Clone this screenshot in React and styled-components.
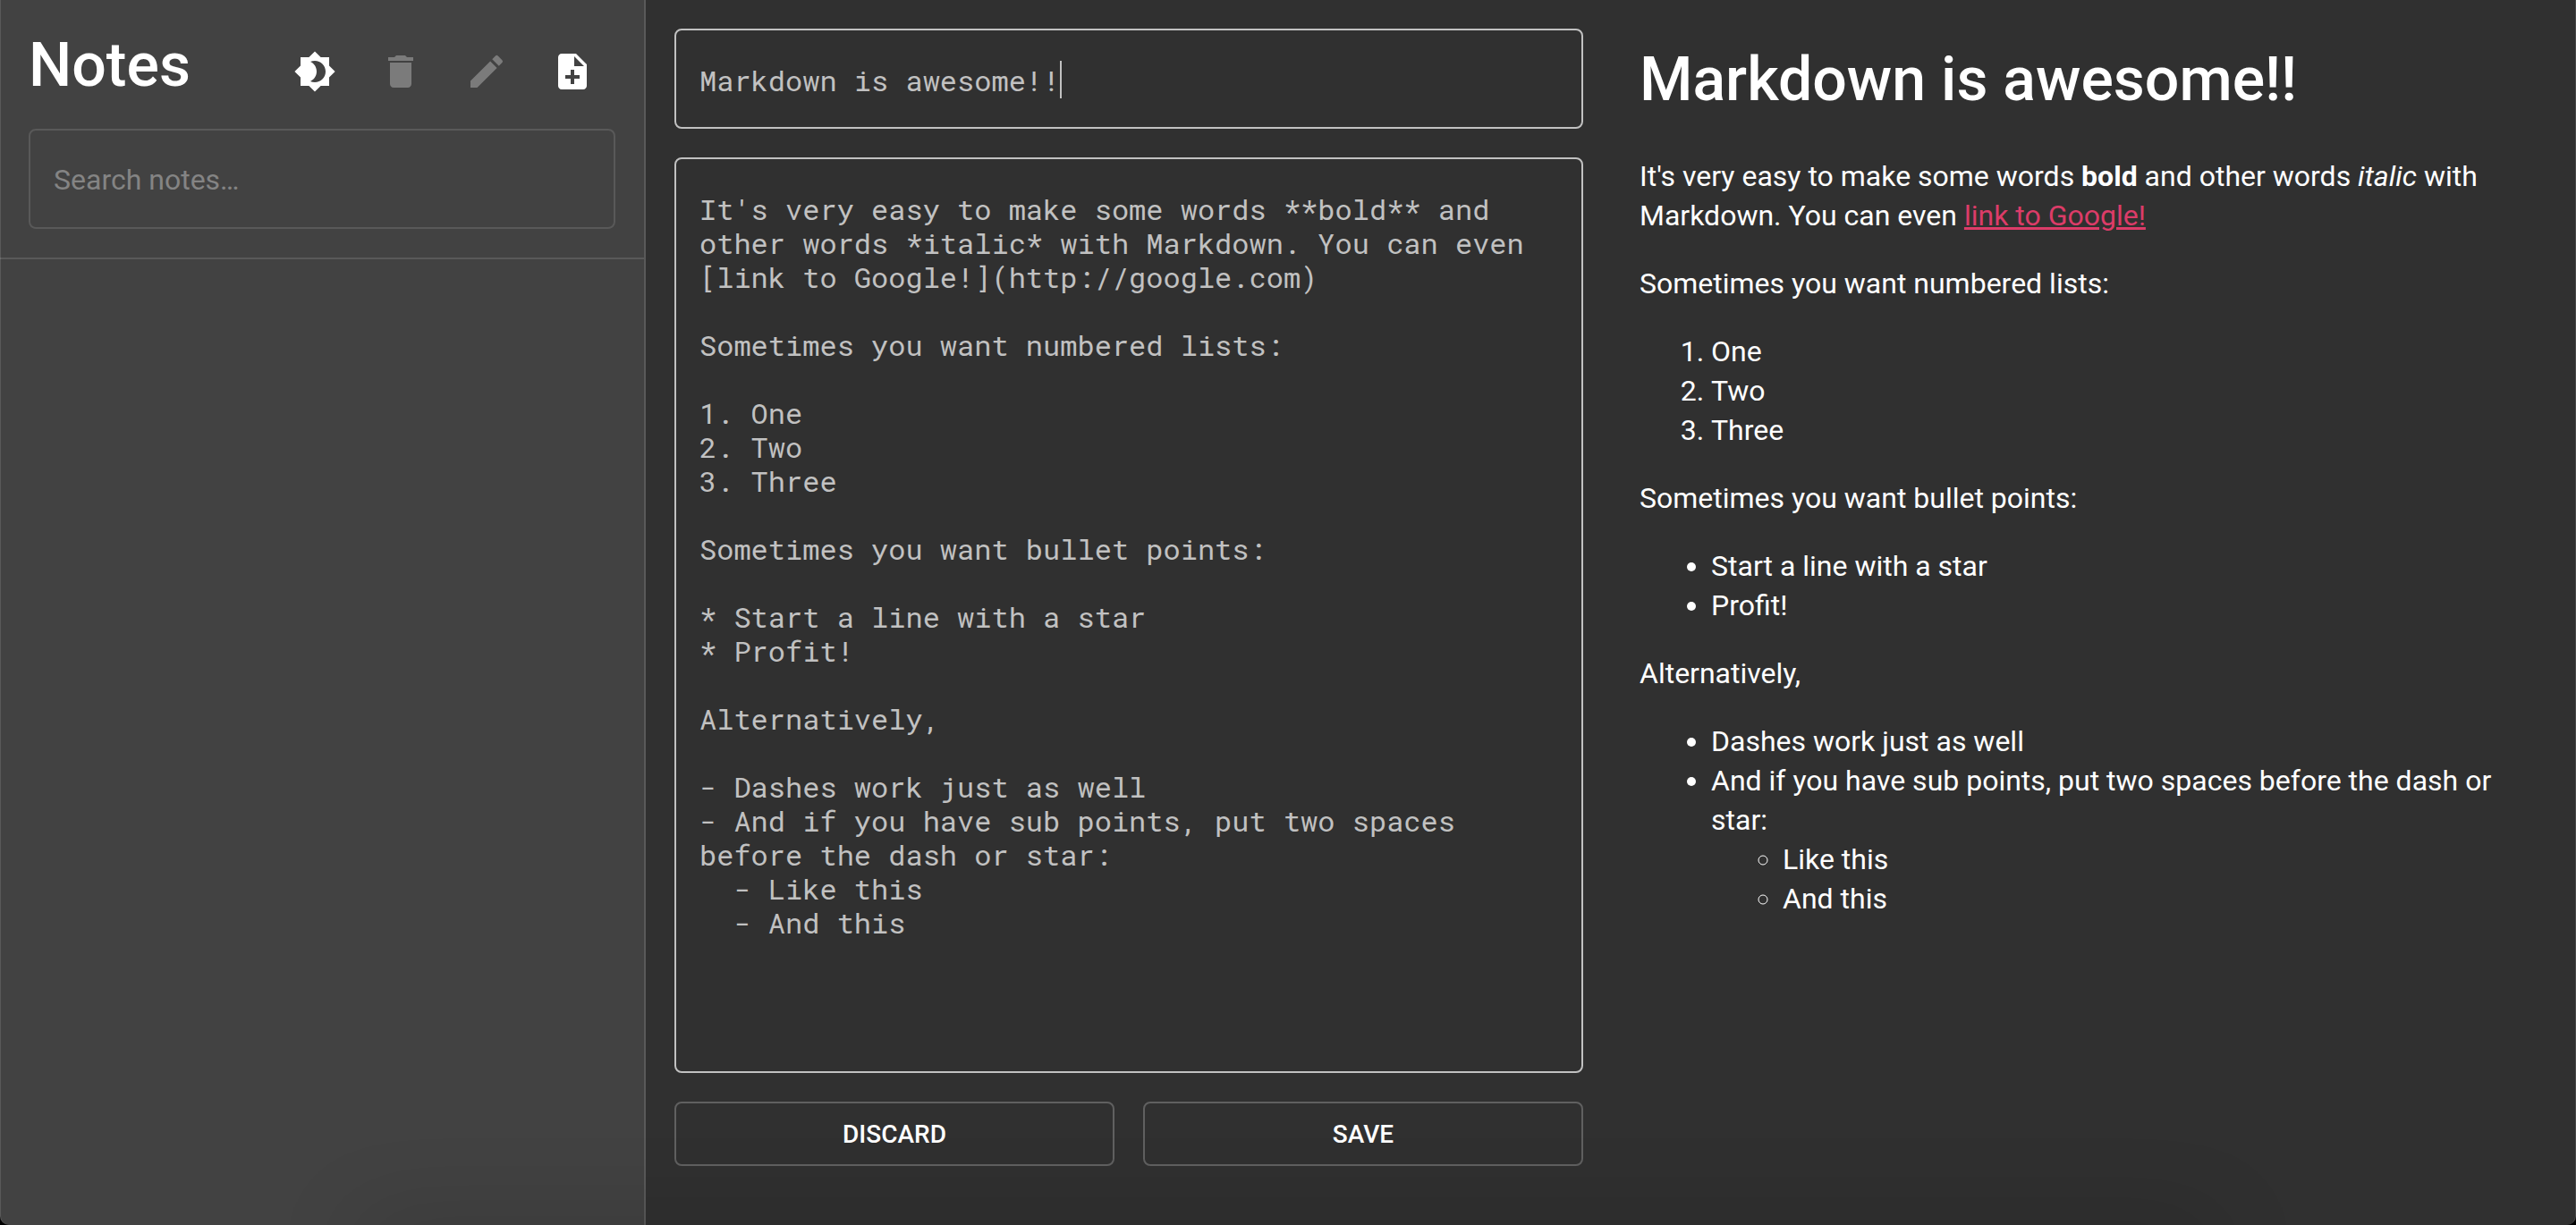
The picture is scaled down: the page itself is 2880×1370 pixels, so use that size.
import React, { useState } from "react";
import styled, { createGlobalStyle } from "styled-components";
import { MdBrightness4, MdDelete, MdEdit, MdNoteAdd } from "react-icons/md";

const GlobalStyle = createGlobalStyle`
  *, *::before, *::after { box-sizing: border-box; }
  html, body, #root { height: 100%; }
  body {
    margin: 0;
    background: #303030;
    color: #fff;
    font-family: Roboto, "Liberation Sans", sans-serif;
    font-size: 32px;
    line-height: 44px;
  }
`;

const MONO = `"Roboto Mono", "DejaVu Sans Mono", "Liberation Mono", monospace`;

const Shell = styled.div`
  display: flex;
  height: 100%;
  overflow: hidden;
`;

/* Window edge and the soft shadow along its bottom, drawn over the panels. */
const WindowFrame = styled.div`
  position: fixed;
  inset: 0;
  overflow: hidden;
  pointer-events: none;
  border: 1px solid rgba(255, 255, 255, 0.12);
  border-width: 0 1px;
  border-radius: 0 0 10px 10px;
  box-shadow: 0 0 0 12px #000;

  &::after {
    content: "";
    position: absolute;
    left: 14%;
    right: 14%;
    bottom: -60px;
    height: 60px;
    box-shadow: 0 0 100px rgba(0, 0, 0, 0.18);
  }
`;

const Sidebar = styled.aside`
  flex: 0 0 25%;
  box-sizing: content-box;
  background: #424242;
  border-right: 2px solid #595959;
`;

const SidebarHeader = styled.header`
  padding: 32px;
  border-bottom: 2px solid #595959;
`;

const TitleRow = styled.div`
  display: flex;
  justify-content: space-between;
  align-items: flex-start;
  margin-bottom: 16px;
`;

const Title = styled.h1`
  margin: 0;
  font-size: 68px;
  font-weight: 500;
  line-height: 82px;
`;

const Actions = styled.div`
  display: flex;
`;

const IconButton = styled.button`
  display: grid;
  place-items: center;
  width: 96px;
  height: 96px;
  padding: 0;
  border: 0;
  border-radius: 50%;
  background: none;
  color: #fff;
  cursor: pointer;

  svg { width: 48px; height: 48px; }

  &:disabled {
    color: rgba(255, 255, 255, 0.3);
    cursor: default;
  }
`;

const SearchInput = styled.input`
  display: block;
  width: 100%;
  height: 112px;
  padding: 2px 26px 0;
  border: 2px solid #595959;
  border-radius: 8px;
  background: none;
  color: #fff;
  font: inherit;
  outline: 0;

  &::placeholder { color: #848484; opacity: 1; }
`;

const Workspace = styled.main`
  flex: 1;
  min-width: 0;
  display: grid;
  grid-template-columns: 1fr 1fr;
`;

const Editor = styled.form`
  display: flex;
  flex-direction: column;
  gap: 32px;
  min-width: 0;
  padding: 32px 31px 66px 32px;
`;

const Field = styled.div`
  position: relative;
  font: 32px/38px ${MONO};
`;

const TitleInput = styled.input`
  display: block;
  width: 100%;
  height: 112px;
  padding: 2px 26px 0;
  border: 2px solid #c1c1c1;
  border-radius: 8px;
  background: none;
  color: #c1c1c1;
  font: inherit;
  outline: 0;
`;

const Caret = styled.span`
  position: absolute;
  top: 36px;
  width: 2px;
  height: 42px;
  background: #c1c1c1;
`;

const BodyInput = styled.textarea`
  flex: 1;
  display: block;
  width: 100%;
  padding: 37px 26px;
  border: 2px solid #c1c1c1;
  border-radius: 8px;
  background: none;
  color: #c1c1c1;
  font: 32px/38px ${MONO};
  outline: 0;
  resize: none;
`;

const ButtonRow = styled.div`
  display: grid;
  grid-template-columns: 1fr 1fr;
  gap: 32px;
`;

const OutlineButton = styled.button`
  height: 72px;
  padding: 2px 30px 0;
  border: 2px solid #606060;
  border-radius: 8px;
  background: none;
  color: #fff;
  font: 500 28px/48px Roboto, "Liberation Sans", sans-serif;
  text-transform: uppercase;
  cursor: pointer;
`;

const Preview = styled.article`
  min-width: 0;
  padding: 47px 32px 32px;

  p, ul, ol { margin: 0 0 32px; }
  ul, ol { padding-left: 80px; }
  ul ul { margin: 0; }
  strong { font-weight: 700; }
  a { color: #dc3c68; }
`;

const PreviewTitle = styled.h2`
  margin: 0 0 44px;
  font-size: 68px;
  font-weight: 500;
  line-height: 84px;
`;

const INITIAL_BODY = `It's very easy to make some words **bold** and other words *italic* with Markdown. You can even [link to Google!](http://google.com)

Sometimes you want numbered lists:

1. One
2. Two
3. Three

Sometimes you want bullet points:

* Start a line with a star
* Profit!

Alternatively,

- Dashes work just as well
- And if you have sub points, put two spaces before the dash or star:
  - Like this
  - And this`;

export default function App() {
  const [title, setTitle] = useState("Markdown is awesome!!");
  const [body, setBody] = useState(INITIAL_BODY);

  return (
    <>
      <GlobalStyle />
      <Shell>
        <Sidebar>
          <SidebarHeader>
            <TitleRow>
              <Title>Notes</Title>
              <Actions>
                <IconButton type="button" aria-label="Toggle theme"><MdBrightness4 /></IconButton>
                <IconButton type="button" aria-label="Delete note" disabled><MdDelete /></IconButton>
                <IconButton type="button" aria-label="Edit note" disabled><MdEdit /></IconButton>
                <IconButton type="button" aria-label="New note"><MdNoteAdd /></IconButton>
              </Actions>
            </TitleRow>
            <SearchInput type="text" aria-label="Search notes" placeholder="Search notes…" />
          </SidebarHeader>
        </Sidebar>
        <Workspace>
          <Editor onSubmit={(e) => e.preventDefault()}>
            <Field>
              <TitleInput
                aria-label="Title"
                value={title}
                onChange={(e) => setTitle(e.target.value)}
              />
              <Caret style={{ left: `calc(28px + ${title.length}ch)` }} />
            </Field>
            <BodyInput
              aria-label="Note"
              spellCheck={false}
              value={body}
              onChange={(e) => setBody(e.target.value)}
            />
            <ButtonRow>
              <OutlineButton type="button">Discard</OutlineButton>
              <OutlineButton type="submit">Save</OutlineButton>
            </ButtonRow>
          </Editor>
          <Preview>
            <PreviewTitle>{title}</PreviewTitle>
            <p>
              It's very easy to make some words <strong>bold</strong> and other words{" "}
              <em>italic</em> with Markdown. You can even{" "}
              <a href="http://google.com">link to Google!</a>
            </p>
            <p>Sometimes you want numbered lists:</p>
            <ol>
              <li>One</li>
              <li>Two</li>
              <li>Three</li>
            </ol>
            <p>Sometimes you want bullet points:</p>
            <ul>
              <li>Start a line with a star</li>
              <li>Profit!</li>
            </ul>
            <p>Alternatively,</p>
            <ul>
              <li>Dashes work just as well</li>
              <li>
                And if you have sub points, put two spaces before the dash or star:
                <ul>
                  <li>Like this</li>
                  <li>And this</li>
                </ul>
              </li>
            </ul>
          </Preview>
        </Workspace>
      </Shell>
      <WindowFrame />
    </>
  );
}
